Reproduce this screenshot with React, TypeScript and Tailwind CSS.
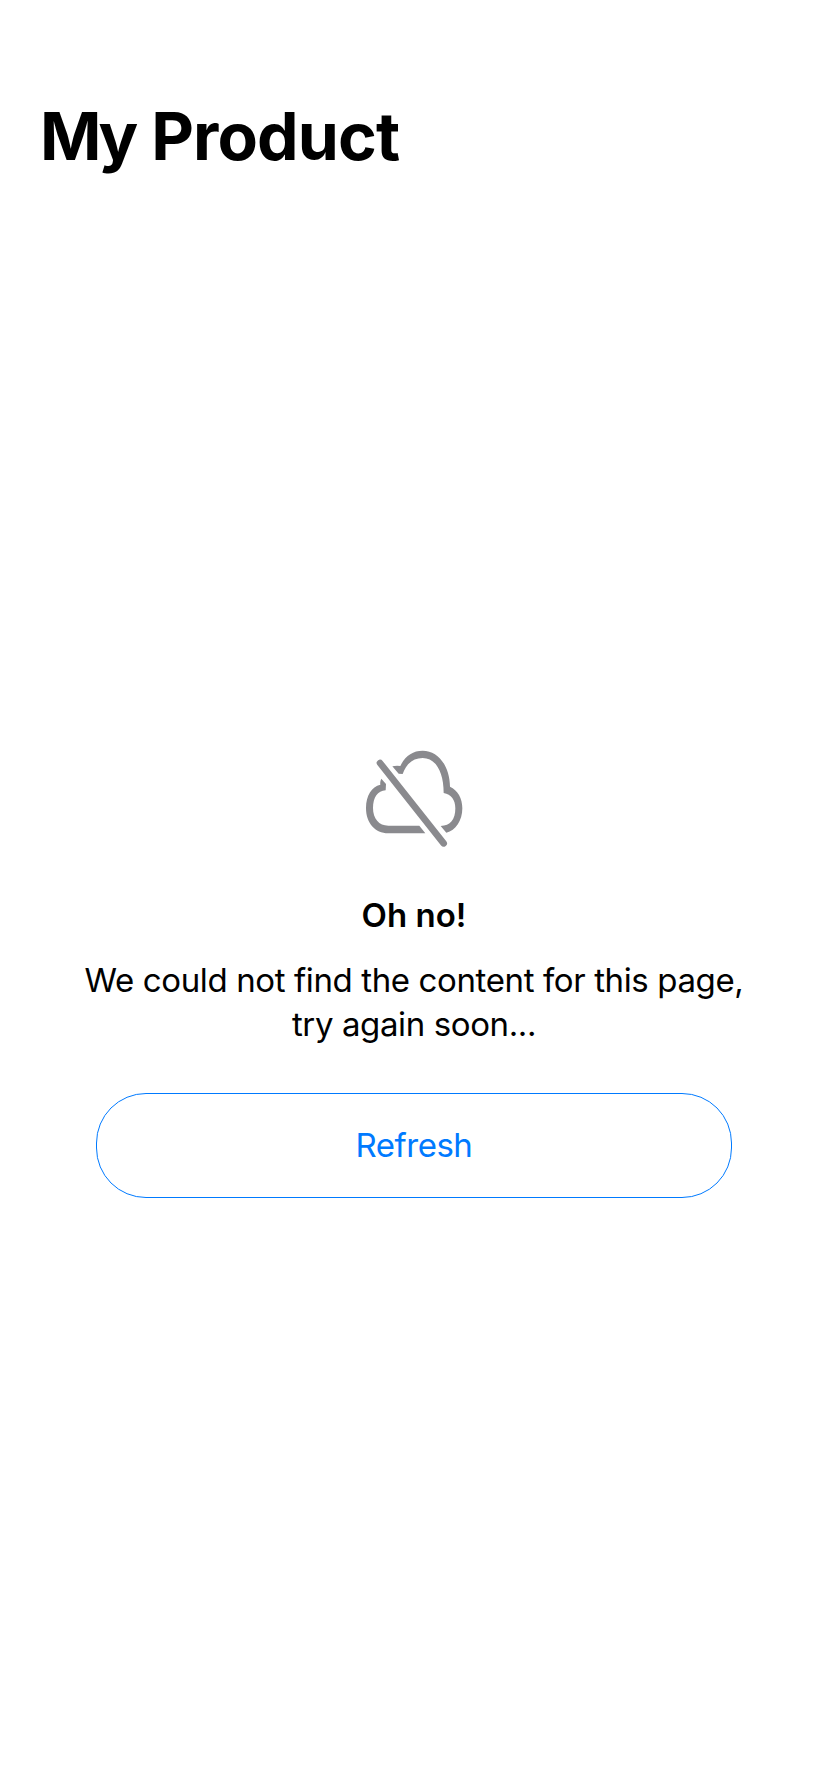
function CloudSlashIcon() {
  return (
    <svg viewBox="0 0 384 375" className="h-[125px] w-[128px] fill-[#8a8a8e]" aria-hidden="true">
      <path d="M94 131L108 147L107 166C83 167 69 188 69 219C69 251 87 272 115 272H208L226 295H115C75 295 48 264 48 219C48 181 65 155 91 149C90 143 91 137 94 131Z" />
      <path d="M127 94Q139 91 151 93C165 63 188 47 218 47C265 47 299 93 300 155C323 165 337 190 337 220C337 257 317 287 289 293L272 273C301 273 316 254 316 220C316 195 304 178 281 174C281 110 257 69 218 69C188 69 168 88 158 117L146 116Z" />
      <path d="M90 84L281 325" fill="none" stroke="#8a8a8e" strokeWidth="20" strokeLinecap="round" />
    </svg>
  );
}

export default function App() {
  return (
    <main className="flex h-[1792px] w-[828px] flex-col bg-white font-['Inter','Liberation_Sans',sans-serif] text-black">
      <h1 className="pt-[96px] pl-[40px] text-[66px] leading-[80px] font-bold tracking-[-0.9px] [word-spacing:2px]">
        <span className="tracking-[-3.7px]">My</span> Product
      </h1>
      <section className="mt-[559px] flex flex-col items-center text-center">
        <CloudSlashIcon />
        <h2 className="mt-[35px] text-[33px] leading-[40px] font-semibold">Oh no!</h2>
        <p className="mt-[23px] text-[33px] leading-[44px] tracking-[-0.38px]">
          We could not find the content for this page,
          <br />
          try again soon...
        </p>
        <button className="mt-[47px] h-[105px] w-[636px] rounded-[50px] border border-[#007aff] pb-[2px] text-[33px] leading-[44px] tracking-[-0.5px] text-[#007aff]">
          Refresh
        </button>
      </section>
    </main>
  );
}
